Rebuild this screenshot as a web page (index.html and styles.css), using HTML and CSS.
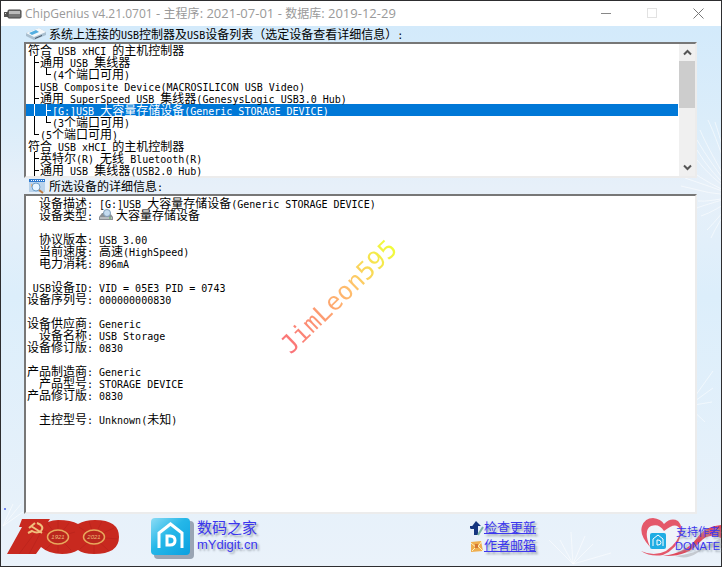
FILE: index.html
```html
<!DOCTYPE html>
<html lang="zh-CN">
<head>
<meta charset="utf-8">
<title>ChipGenius</title>
<link rel="stylesheet" href="styles.css">
</head>
<body>
<div class="window">
  <header class="titlebar">
    <svg class="app-icon" width="18" height="10" viewBox="0 0 18 10" aria-hidden="true">
      <rect x="0" y="3" width="4" height="5" fill="#555"/><rect x="1" y="4" width="1" height="1" fill="#ddd"/>
      <rect x="4" y="1" width="13" height="8" rx="1" fill="#777" stroke="#444"/>
      <rect x="5" y="2" width="11" height="3" fill="#bbb"/>
    </svg>
    <h1><span>ChipGenius v4.21.0701</span> - <span>主程序</span>: 2021-07-01 - <span>数据库</span>: 2019-12-29</h1>
    <button class="cap" aria-label="最小化"><svg width="11" height="11"><path d="M0 5.5H10" stroke="#888" fill="none"/></svg></button>
    <button class="cap" aria-label="最大化" disabled><svg width="11" height="11"><rect x=".5" y=".5" width="9" height="9" fill="none" stroke="#e2e2e2"/></svg></button>
    <button class="cap" aria-label="关闭"><svg width="11" height="11"><path d="M.5.5l10 10M10.500.5l-10 10" stroke="#777" fill="none"/></svg></button>
  </header>

  <main class="client">
    <svg class="scenery" viewBox="0 0 720 540" preserveAspectRatio="xMaxYMin slice" aria-hidden="true">
      <g fill="none" stroke="#fff" stroke-width="1" opacity=".55">
        <path d="M735 170Q715 110 707 94M735 170Q708 125 699 104M735 170Q708 135 696 114M735 170Q708 145 696 124M735 170Q708 150 696 134M735 170Q708 158 690 145M735 170Q708 160 684 152M735 170Q708 168 680 160M735 170Q708 176 697 175M735 170Q715 185 700 190M735 170Q715 195 706 204M735 170Q715 200 710 212M735 170Q722 120 714 96M735 170Q700 180 696 182"/>
        <path d="M687 380L712 345M687 380L712 362M687 380L711 376M687 380L704 396M687 380L696 396"/>
        <path d="M572 538L548 514M572 538L559 514M572 538L570 506M572 538L584 510M572 538L592 518M572 538L610 527"/>
        <path d="M2 500L12 478M2 500L20 478M2 500L22 486"/>
      </g>
      <rect x="3" y="482" width="2" height="2" fill="#6f86f0"/>
    </svg>

    <section class="block">
      <h2 class="caption mixed" id="tree-label">
        <svg width="22" height="14" viewBox="0 0 22 14" aria-hidden="true">
          <path d="M1 6L14 1l7 4v3L9 13 1 9z" fill="#a9bfd0"/><path d="M1 6L14 1l7 4L9 10z" fill="#f4f8fb"/><path d="M4 6l7-3 3 2-7 3z" fill="#54aee0"/><path d="M10 11l7-3v1l-7 3z" fill="#456"/>
        </svg>
        <span>系统上连接的<i>USB</i>控制器及<i>USB</i>设备列表（选定设备查看详细信息）<i>:</i></span>
      </h2>
      <div class="sunken tree">
        <ul class="rows mixed" role="listbox" aria-labelledby="tree-label" tabindex="0">
          <li role="option">符合<i> USB xHCI </i>的主机控制器</li>
          <li role="option"><s class="tee"></s>通用<i> USB </i>集线器</li>
          <li role="option"><s class="bar"></s><s class="end"></s><i>(4</i>个端口可用<i>)</i></li>
          <li role="option"><s class="tee"></s><i>USB Composite Device(MACROSILICON USB Video)</i></li>
          <li role="option"><s class="tee"></s>通用<i> SuperSpeed USB </i>集线器<i>(GenesysLogic USB3.0 Hub)</i></li>
          <li role="option" aria-selected="true" class="selected"><s class="bar"></s><s class="tee"></s><i>[G:]USB </i>大容量存储设备<i>(Generic STORAGE DEVICE)</i></li>
          <li role="option"><s class="bar"></s><s class="end"></s><i>(3</i>个端口可用<i>)</i></li>
          <li role="option"><s class="end"></s><i>(5</i>个端口可用<i>)</i></li>
          <li role="option">符合<i> USB xHCI </i>的主机控制器</li>
          <li role="option"><s class="tee"></s>英特尔<i>(R) </i>无线<i> Bluetooth(R)</i></li>
          <li role="option"><s class="tee"></s>通用<i> USB </i>集线器<i>(USB2.0 Hub)</i></li>
        </ul>
        <div class="scroll">
          <button aria-label="向上滚动"><svg width="9" height="7" viewBox="0 0 9 7"><path d="M1 5.500L4.500 2 8 5.500" fill="none" stroke="#555" stroke-width="2"/></svg></button>
          <div class="track"><div class="thumb"></div></div>
          <button aria-label="向下滚动"><svg width="9" height="7" viewBox="0 0 9 7"><path d="M1 1.500L4.500 5 8 1.500" fill="none" stroke="#555" stroke-width="2"/></svg></button>
        </div>
      </div>
    </section>

    <section class="block grow">
      <h2 class="caption mixed">
        <svg class="lens" width="18" height="15" viewBox="0 0 18 15" aria-hidden="true">
          <rect x="1" y="0" width="16" height="13" fill="#b9d3ec"/><rect x="1" y="0" width="16" height="3" fill="#2f7bd0"/><path d="M3 1.500h13" stroke="#fff" stroke-dasharray="1 1"/>
          <rect x="3" y="5" width="3" height="3" fill="#e4b684"/><circle cx="8" cy="8" r="4" fill="#e8f5ff" stroke="#6f9fc8"/><path d="M11 11l4 3" stroke="#c27a3c" stroke-width="2"/>
        </svg>
        <span>所选设备的详细信息<i>:</i></span>
      </h2>
      <div class="sunken details mixed">
        <dl>
          <dt>设备描述<i>:</i></dt><dd><i>[G:]USB </i>大容量存储设备<i>(Generic STORAGE DEVICE)</i></dd>
          <dt>设备类型<i>:</i></dt><dd class="kind"><svg width="14" height="12" viewBox="0 0 14 12" aria-hidden="true"><path d="M0 8l3-4h8l3 4v3H0z" fill="#8b9095"/><path d="M1 8h12v2H1z" fill="#b8bcc0"/><circle cx="8" cy="4" r="3.500" fill="#c5dcf0" stroke="#7f9db8"/><path d="M10 9h2" stroke="#4caf50"/></svg>大容量存储设备</dd>
        </dl>
        <dl>
          <dt>协议版本<i>:</i></dt><dd><i>USB 3.00</i></dd>
          <dt>当前速度<i>:</i></dt><dd>高速<i>(HighSpeed)</i></dd>
          <dt>电力消耗<i>:</i></dt><dd><i>896mA</i></dd>
        </dl>
        <dl>
          <dt><i>USB</i>设备<i>ID:</i></dt><dd><i>VID = 05E3 PID = 0743</i></dd>
          <dt>设备序列号<i>:</i></dt><dd><i>000000000830</i></dd>
        </dl>
        <dl>
          <dt>设备供应商<i>:</i></dt><dd><i>Generic</i></dd>
          <dt>设备名称<i>:</i></dt><dd><i>USB Storage</i></dd>
          <dt>设备修订版<i>:</i></dt><dd><i>0830</i></dd>
        </dl>
        <dl>
          <dt>产品制造商<i>:</i></dt><dd><i>Generic</i></dd>
          <dt>产品型号<i>:</i></dt><dd><i>STORAGE DEVICE</i></dd>
          <dt>产品修订版<i>:</i></dt><dd><i>0830</i></dd>
        </dl>
        <dl>
          <dt>主控型号<i>:</i></dt><dd><i>Unknown(</i>未知<i>)</i></dd>
        </dl>
        <div class="watermark">JimLeon595</div>
      </div>
    </section>

    <footer class="footer">
      <svg class="centenary" width="114" height="38" viewBox="0 0 114 38" role="img" aria-label="1921 2021">
        <path d="M15 1h28l-2 3q5-2 10-2 13 0 20 4 7-4 17-4 24 0 24 17 0 17-25 17-11 0-16-4-6 4-16 4-13 0-21-7l-5 7H0l15-27h-3z" fill="#c8291f"/>
        <g stroke="#a81d18" stroke-width="1" opacity=".35"><path d="M22 36l12-22M12 36l15-20M51 19L34 12M51 19L40 5M51 19L51 3M51 19L62 5M51 19L68 14M51 19L38 32M51 19L51 35M51 19L64 32M87 19L72 9M87 19L82 3M87 19L95 3M87 19L107 10M87 19L111 21M87 19L102 33M87 19L87 35M87 19L73 31"/></g>
        <ellipse cx="51" cy="19" rx="10.500" ry="7" fill="#b9271d" stroke="#e8a85c" stroke-width="1.500"/>
        <ellipse cx="87" cy="19" rx="10.500" ry="7" fill="#b9271d" stroke="#e8a85c" stroke-width="1.500"/>
        <g class="years"><text x="51" y="21">1921</text><text x="87" y="21">2021</text></g>
        <path d="M30 5q8 3 4 8-4 3-9 0l-4 2M24 8l11 7M22 10l6-5" fill="none" stroke="#f0bf7c" stroke-width="2"/>
      </svg>
      <a class="brand" href="#">
        <svg width="44" height="42" viewBox="0 0 44 42" aria-hidden="true">
          <defs><linearGradient id="tile" x2="1" y2="1"><stop stop-color="#8ddcf5"/><stop offset=".45" stop-color="#25b7e8"/><stop offset="1" stop-color="#0aa0e0"/></linearGradient></defs>
          <rect x="3" y="3" width="40" height="38" rx="4" fill="#9aa5b4"/>
          <rect x="0" y="0" width="39" height="37" rx="4" fill="url(#tile)"/>
          <path d="M8 30V15L19.500 6 31 15v15" fill="none" stroke="#fff" stroke-width="3"/>
          <path d="M16 18h3q5 0 5 4.500t-5 4.500h-3z" fill="none" stroke="#fff" stroke-width="3"/>
        </svg>
        <span class="brand-text"><b>数码之家</b><span>mYdigit.cn</span></span>
      </a>
      <nav class="links">
        <a href="#"><svg width="14" height="15" viewBox="0 0 14 15" aria-hidden="true"><path d="M6 0l5 5H8v9H4V8H0z" fill="#15357f"/><path d="M0 5h3v2H0z" fill="#15357f"/><path d="M13 6l-5 8" stroke="#7cb3a3" stroke-width="2"/></svg><span>检查更新</span></a>
        <a href="#"><svg width="14" height="15" viewBox="0 0 14 15" aria-hidden="true"><path d="M1 3l10-1 2 10-12 1z" fill="#efae4e"/><path d="M1 4l6 5 5-7M2 12l4-4M8 7l5 5" fill="none" stroke="#fff0c0"/><path d="M5 5h3v4H5z" fill="#d37834"/></svg><span>作者邮箱</span></a>
      </nav>
      <a class="donate" href="#">
        <svg width="80" height="42" viewBox="0 0 80 42" aria-hidden="true">
          <path d="M34 38Q50 36 58 32T80 20V30Q66 28 56 35T34 38z" fill="#c6cbd1"/>
          <path d="M22 38C8 34-2 18 1 9 5-3 19-1 24 7 31-1 41 1 40 12 39 23 31 33 22 38z" fill="#f0f5fa"/>
          <path d="M22 38Q45 35 56 20 64 8 80 7V20Q68 14 59 24 47 39 22 38z" fill="#e0485a"/>
          <path d="M0 33Q13 39 25 33 40 22 39 11 35 3 23 13 18 5 10 8 2 12 9 29-2 17 1 8 4 0 12 0 20 1 23 6 30-1 37 3 42 8 40 17 36 31 22 37 9 39 0 33z" fill="#e4586a"/>
          <rect x="9" y="15" width="16" height="16" rx="2" fill="#20ade3"/>
          <path d="M12 28v-7l5-4 5 4v7M16 22h1q3 0 3 2.500T17 27h-1z" fill="none" stroke="#fff"/>
        </svg>
        <span class="donate-text"><b>支持作者</b><span>DONATE</span></span>
      </a>
    </footer>
  </main>
</div>
</body>
</html>
```
FILE: styles.css
```css
* { box-sizing: border-box; }
body { margin: 0; }
h1, h2, ul, dl, dd { margin: 0; padding: 0; font-weight: normal; }
button { border: 0; padding: 0; background: none; }

.window {
  min-height: 100vh;
  display: flex;
  flex-direction: column;
  border: 1px solid #2d2d2f;
  background: #fff;
}

.titlebar {
  height: 25px;
  flex: none;
  display: flex;
  align-items: center;
  padding-left: 3px;
}
.titlebar h1 {
  flex: 1;
  margin-left: 3px;
  font: 13px/24px "Open Sans", "Noto Sans CJK SC", sans-serif;
  color: #999;
  white-space: nowrap;
}
.titlebar h1 span { font-size: 12px; }
.cap {
  width: 46px;
  height: 24px;
  display: flex;
  align-items: center;
  justify-content: center;
}

.client {
  position: relative;
  flex: 1;
  display: flex;
  flex-direction: column;
  background: linear-gradient(#d3eafb 0%, #dbedfa 18%, #e7f0f9 30%, #dceefb 50%, #e7f1fa 90%, #eaf2fa 100%);
}
.scenery {
  position: absolute;
  inset: 0;
  width: 100%;
  height: 100%;
}
.block, .footer { position: relative; }
.block {
  display: flex;
  flex-direction: column;
  padding: 0 24px 0 23px;
}
.grow { flex: 1; }

/* Full-width glyphs are 12px, half-width glyphs 6px */
.mixed {
  font: 12px/12px "Noto Sans CJK SC", sans-serif;
  color: #000;
}
.mixed i {
  font: 10px/12px "DejaVu Sans Mono", monospace;
}
.mixed li, .mixed dt, .mixed dd, .mixed span { white-space: pre; }

.caption {
  height: 16px;
  display: flex;
  align-items: center;
  gap: 2px;
}
.caption span { line-height: 16px; }
.caption svg { margin-left: 1px; }
.caption .lens { margin: 0 1px 0 4px; }

.sunken {
  background: #fff;
  border: 2px solid;
  border-color: #777 #ececec #ececec #777;
}

.tree { display: flex; }
.rows {
  flex: 1;
  margin-right: 1px;
  list-style: none;
}
.rows li {
  height: 12px;
  padding-left: 2px;
}
.selected {
  background: #0078d7;
  color: #fff;
}

/* Tree connectors, one full-width cell each */
.rows s {
  display: inline-block;
  width: 12px;
  height: 12px;
  vertical-align: top;
  background:
    linear-gradient(currentColor, currentColor) 6px 0 / 1px 12px no-repeat,
    linear-gradient(currentColor, currentColor) 6px 6px / 5px 1px no-repeat;
}
.rows .bar { background-size: 1px 12px, 0 0; }
.rows .end { background-size: 1px 6px, 5px 1px; }

.scroll {
  width: 16px;
  display: flex;
  flex-direction: column;
  background: #f0f0f0;
}
.scroll button {
  height: 17px;
  display: flex;
  align-items: center;
  justify-content: center;
}
.track { flex: 1; }
.thumb {
  height: 48%;
  background: #cdcdcd;
}

.details {
  position: relative;
  flex: 1;
  display: flex;
  flex-direction: column;
  gap: 12px;
  padding: 1px;
}
.details dl {
  display: grid;
  grid-template-columns: 66px 1fr;
  grid-auto-rows: 12px;
  column-gap: 6px;
}
.details dt { text-align: right; }
.details .kind {
  display: flex;
  gap: 3px;
}
.watermark {
  position: absolute;
  left: 238px;
  top: 86px;
  font: 25px/30px "DejaVu Sans Mono", monospace;
  background: linear-gradient(90deg, #fa6f78, #ffc06c 60%, #efff38);
  background-clip: text;
  color: transparent;
  transform: rotate(-44deg);
}

.footer {
  height: 52px;
  flex: none;
  display: flex;
  align-items: flex-start;
  padding: 4px 0 0 6px;
  font-family: "Liberation Sans", "Noto Sans CJK SC", sans-serif;
}
.footer a {
  display: flex;
  color: #3b36ee;
}
.footer b { font-weight: normal; }
.years {
  font: italic 6px "Liberation Sans", sans-serif;
  fill: #efb879;
  text-anchor: middle;
}
.brand {
  margin-left: 30px;
  gap: 2px;
  text-decoration: none;
}
.brand-text, .donate-text {
  display: flex;
  flex-direction: column;
  text-shadow: 2px 2px 2px #9aa3ae;
}
.brand-text {
  font-size: 13px;
  line-height: 16px;
}
.brand-text b {
  font-size: 15px;
  line-height: 19px;
}
.links {
  margin: 1px 105px 0 auto;
  font-size: 13px;
  line-height: 18px;
  text-shadow: 2px 2px 2px #9aa3ae;
}
.links a { align-items: center; }
.links span { text-decoration: underline; }
.donate {
  position: relative;
  text-decoration: none;
}
.donate-text {
  position: absolute;
  right: 1px;
  top: 7px;
  font-size: 11px;
  line-height: 14px;
  text-align: right;
}
```
